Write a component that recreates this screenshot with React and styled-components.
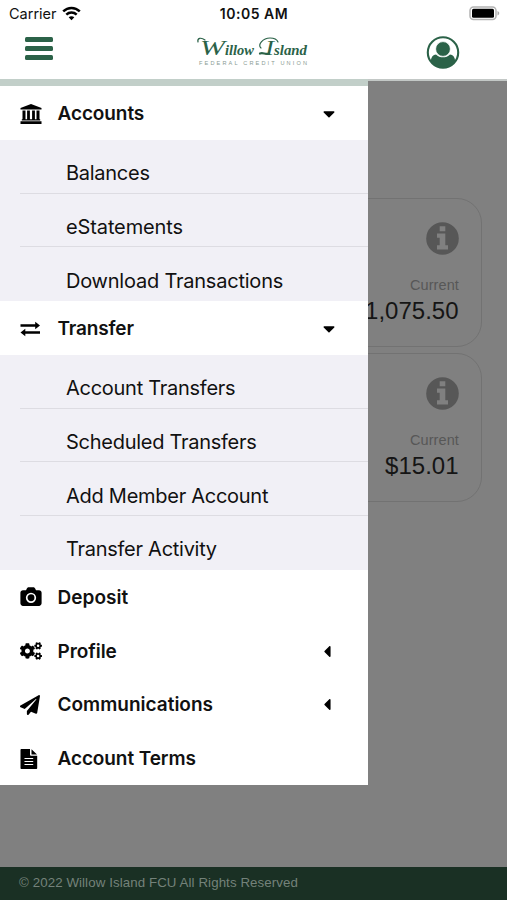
import React from 'react';
import styled, { createGlobalStyle } from 'styled-components';
import {
  FaCaretDown,
  FaCaretLeft,
  FaCogs,
  FaPaperPlane
} from 'react-icons/fa';

const green = '#2b6248';

const GlobalStyle = createGlobalStyle`
  * {
    box-sizing: border-box;
  }
  body {
    margin: 0;
    background: #808080;
    font-family: Inter, 'Liberation Sans', sans-serif;
  }
`;
const Screen = styled.div`
  position: relative;
  display: flex;
  flex-direction: column;
  width: 507px;
  height: 900px;
  overflow: hidden;
`;
const Header = styled.header`
  height: 81px;
  background: #fff;
  border-bottom: 2px solid #c3c8c6;
`;
const StatusBar = styled.div`
  display: grid;
  grid-template-columns: 1fr auto 1fr;
  align-items: center;
  height: 27px;
  padding: 0 7px 0 9px;
  color: #111;
`;
const Carrier = styled.div`
  display: flex;
  align-items: center;
  gap: 5px;
  font-size: 14.5px;
`;
const Clock = styled.div`
  margin-right: 1px;
  font-size: 14px;
  font-weight: 600;
  letter-spacing: 0.5px;
`;
const BatterySlot = styled.div`
  display: flex;
  justify-content: flex-end;
`;
const Toolbar = styled.div`
  display: flex;
  align-items: center;
  height: 50px;
  padding: 0 47px 0 25px;
`;
const MenuButton = styled.button`
  display: flex;
  flex-direction: column;
  gap: 4px;
  width: 28px;
  margin: 0 142px 7px 0;
  padding: 0;
  border: 0;
  background: none;
`;
const MenuBar = styled.span`
  height: 5px;
  border-radius: 1.5px;
  background: ${green};
`;
const ProfileButton = styled.button`
  height: 34px;
  margin: 1px 0 0 auto;
  padding: 0;
  border: 0;
  background: none;
`;
const Content = styled.main`
  display: flex;
  flex: 1;
  flex-direction: column;
  gap: 6px;
  padding: 116.5px 25px 0;
  font-family: 'Liberation Sans', sans-serif;
`;
const Card = styled.section`
  display: flex;
  flex-direction: column;
  align-items: flex-end;
  height: 149px;
  padding: 23.5px 22px 0 0;
  border: 1px solid #727272;
  border-radius: 25px;
  color: #575757;
`;
const CardLabel = styled.div`
  margin-top: 21px;
  font-size: 14.5px;
  line-height: 18px;
  letter-spacing: 0.1px;
`;
const Amount = styled.div`
  margin: 3px 0.5px 0 0;
  color: #151515;
  font-size: 24px;
  line-height: 28px;
`;
const Footer = styled.footer`
  height: 33px;
  padding: 0 19px;
  background: #1a3024;
  color: #74827a;
  font-family: 'Liberation Sans', sans-serif;
  font-size: 13.3px;
  line-height: 31.5px;
  letter-spacing: 0.09px;
`;
const Drawer = styled.nav`
  position: absolute;
  top: 79px;
  left: 0;
  width: 367.5px;
  border-top: 7px solid #c2cfc9;
  background: #fff;
  color: #111;
`;
const MenuRow = styled.div`
  display: flex;
  align-items: center;
  height: 53.75px;
  padding: 1.5px 32px 0 20px;
`;
const IconBox = styled.span`
  display: flex;
  width: 37.5px;
  color: #000;
`;
const MenuLabel = styled.span`
  flex: 1;
  font-size: 19px;
  font-weight: 600;
  letter-spacing: ${p => p.spacing};
`;
const Caret = styled.span`
  display: flex;
  justify-content: center;
  width: 14px;
  margin-right: ${p => p.collapsed && '2px'};
  color: #000;
`;
const SubMenu = styled.div`
  padding-left: 20px;
  background: #f1f0f6;
`;
const SubRow = styled.div`
  height: 53.75px;
  padding: 13.3px 0 0 46px;
  border-bottom: 1px solid #dddce2;
  font-size: 20px;
  line-height: 41px;
  letter-spacing: ${p => p.spacing || '-0.27px'};

  &:last-child {
    border-bottom-color: transparent;
  }
`;

function WifiIcon() {
  return (
    <svg width="19" height="15" viewBox="0 0 19 15" fill="none" stroke="#000" strokeWidth="2.5">
      <path d="M1.2 5.4C6 .8 13 .8 17.8 5.4" />
      <path d="M4.3 8.6c3-2.8 7.4-2.8 10.4 0" />
      <path d="M9.5 14.2l-2.8-2.9c1.6-1.4 4-1.4 5.6 0z" fill="#000" stroke="none" />
    </svg>
  );
}

function BatteryIcon() {
  return (
    <svg width="31" height="15" viewBox="0 0 31 15">
      <rect x="1" y="1" width="26" height="12.5" rx="3.5" fill="#fff" stroke="#b3b3b3" strokeWidth="1.5" />
      <rect x="3" y="2.7" width="22" height="9" rx="1.5" fill="#000" />
      <path d="M28.5 5c2.3.8 2.3 3.6 0 4.4z" fill="#aaa" />
    </svg>
  );
}

function Logo() {
  return (
    <svg width="114" height="34" viewBox="0 -1 114 34">
      <g fill={green} fontFamily="'Liberation Serif', serif" fontStyle="italic">
        <text x="5" y="18.5" fontSize="22" textLength="25" lengthAdjust="spacingAndGlyphs">W</text>
        <text x="30" y="18.5" fontSize="15" fontWeight="bold" textLength="29" lengthAdjust="spacingAndGlyphs">illow</text>
        <text x="70" y="18.5" fontSize="21" textLength="9" lengthAdjust="spacingAndGlyphs">I</text>
        <text x="79" y="18.5" fontSize="15" fontWeight="bold" textLength="33" lengthAdjust="spacingAndGlyphs">sland</text>
      </g>
      {/* swashes around the capitals */}
      <g fill="none" stroke={green} strokeLinecap="round">
        <path d="M3 6C2 2 6 1 10 4" strokeWidth="1.2" />
        <path d="M66 12c-4-3 2-10 9-10 4 0 7 1.500 8 4" strokeWidth="1.2" />
        <path d="M65 17.500c3-1.300 5 1.200 9 .2" strokeWidth="2.2" />
      </g>
      <text x="4" y="28.5" fill="#8b9b93" fontFamily="'Liberation Sans', sans-serif" fontSize="5.6" textLength="108">
        FEDERAL CREDIT UNION
      </text>
    </svg>
  );
}

function UserIcon() {
  return (
    <svg width="34" height="34" viewBox="0 0 34 34" fill={green}>
      <circle cx="17" cy="16.5" r="15.2" fill="none" stroke={green} strokeWidth="2.1" />
      <path d="M4.8 25c.4-4 2.2-6.2 5.2-6.500 3.800 3.800 10.200 3.800 14 0 3 .3 4.800 2.500 5.200 6.500C26.500 30 22 32 17 32S7.500 30 4.800 25z" />
      <circle cx="17" cy="13" r="7.400" stroke="#fff" strokeWidth=".8" />
    </svg>
  );
}

function InfoIcon() {
  return (
    <svg width="33" height="33" viewBox="0 0 33 33">
      <circle cx="16.5" cy="16.5" r="16.3" fill="#575757" />
      <path d="M13.7 4.3h5.6v4.9h-5.6zM11 11.5h8.3v11.700H22v4.300H11v-4.300h2.700v-7.400H11z" fill="#808080" />
    </svg>
  );
}

function BankIcon() {
  return (
    <svg width="22" height="20" viewBox="0 0 22 20">
      <path d="M11 0l10.500 4v1.500H.5V4zM2.500 6.500h3v8.700h1.600V6.500h2.800v8.700h2.200V6.500h2.800v8.700h1.600V6.500h3v8.700h.7v1.300H1.800v-1.300h.7zM.5 17.300h21V20H.5z" />
    </svg>
  );
}

function TransferIcon() {
  return (
    <svg width="21" height="16" viewBox="0 0 21 16">
      <path d="M.5 3.300h14.700V.8l4.800 3.700-4.800 3.700V5.700H.5zM20 10.300H5.300V7.800L.5 11.500l4.800 3.700v-2.500H20z" />
    </svg>
  );
}

function CameraIcon() {
  return (
    <svg width="22" height="20" viewBox="0 0 22 20">
      <path d="M3 3.200h3L7 1.300C7.300.6 8 .2 8.700.2h4.600c.7 0 1.400.4 1.700 1.100l1 1.900h3c1.500 0 2.600 1.200 2.600 2.600v10.500c0 1.500-1.200 2.600-2.600 2.600H3c-1.500 0-2.600-1.200-2.600-2.600V5.800C.4 4.400 1.500 3.200 3 3.200z" />
      <circle cx="11" cy="10.800" r="4.300" fill="none" stroke="#fff" strokeWidth="1.700" />
    </svg>
  );
}

function FileIcon() {
  return (
    <svg width="18" height="20" viewBox="0 0 18 20">
      <path d="M1.500 0H10v5.500c0 .8.600 1.300 1.300 1.300h5.900V19c0 .6-.5 1-1 1H1.500c-.6 0-1-.4-1-1V1c0-.6.4-1 1-1zM11.500.2l5.500 5.200h-5.500z" />
      <path d="M4.500 9.500h8.700M4.500 12.500h8.700M4.500 15.500h8.700" stroke="#fff" strokeWidth="1.200" />
    </svg>
  );
}

const menu = [
  {
    label: 'Accounts',
    spacing: '-0.1px',
    icon: <BankIcon />,
    items: ['Balances', 'eStatements', 'Download Transactions']
  },
  {
    label: 'Transfer',
    spacing: '-0.15px',
    icon: <TransferIcon />,
    items: ['Account Transfers', 'Scheduled Transfers', 'Add Member Account', 'Transfer Activity']
  },
  { label: 'Deposit', spacing: '0.05px', icon: <CameraIcon /> },
  { label: 'Profile', spacing: '-0.05px', icon: <FaCogs size={22} />, collapsed: true },
  { label: 'Communications', spacing: '0px', icon: <FaPaperPlane size={20} />, collapsed: true },
  { label: 'Account Terms', spacing: '-0.1px', icon: <FileIcon /> }
];

// a few labels need a slightly looser fit than the rest
const itemSpacing = {
  eStatements: '-0.12px',
  'Download Transactions': '-0.22px'
};

const balances = ['$1,075.50', '$15.01'];

export default function App() {
  return (
    <Screen>
      <GlobalStyle />
      <Header>
        <StatusBar>
          <Carrier>Carrier <WifiIcon /></Carrier>
          <Clock>10:05 AM</Clock>
          <BatterySlot><BatteryIcon /></BatterySlot>
        </StatusBar>
        <Toolbar>
          <MenuButton aria-label="Menu">
            <MenuBar />
            <MenuBar />
            <MenuBar />
          </MenuButton>
          <Logo />
          <ProfileButton aria-label="Profile"><UserIcon /></ProfileButton>
        </Toolbar>
      </Header>
      <Content>
        {balances.map(amount => (
          <Card key={amount}>
            <InfoIcon />
            <CardLabel>Current</CardLabel>
            <Amount>{amount}</Amount>
          </Card>
        ))}
      </Content>
      <Footer>© 2022 Willow Island FCU All Rights Reserved</Footer>
      <Drawer>
        {menu.map(({ label, spacing, icon, items, collapsed }) => (
          <React.Fragment key={label}>
            <MenuRow>
              <IconBox>{icon}</IconBox>
              <MenuLabel spacing={spacing}>{label}</MenuLabel>
              {items && <Caret><FaCaretDown size={19} /></Caret>}
              {collapsed && <Caret collapsed><FaCaretLeft size={19} /></Caret>}
            </MenuRow>
            {items && (
              <SubMenu>
                {items.map(item => (
                  <SubRow key={item} spacing={itemSpacing[item]}>{item}</SubRow>
                ))}
              </SubMenu>
            )}
          </React.Fragment>
        ))}
      </Drawer>
    </Screen>
  );
}
